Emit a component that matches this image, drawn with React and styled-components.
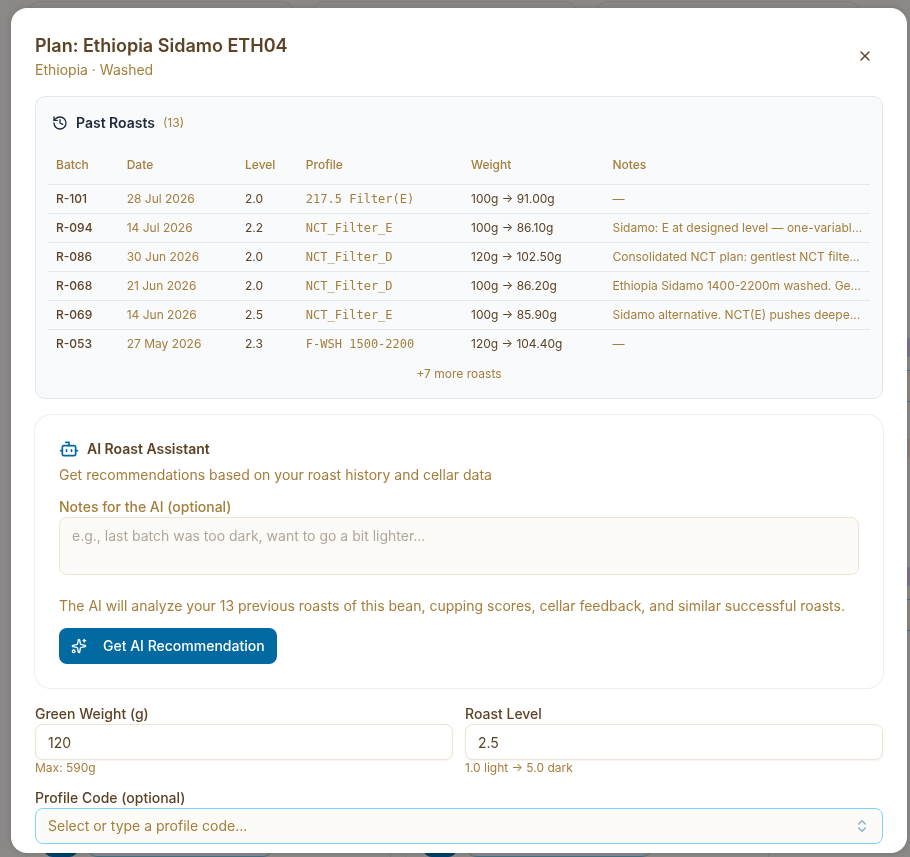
import React, { useState } from 'react';
import styled, { createGlobalStyle } from 'styled-components';
import { History, Bot, Sparkles, X, ChevronsUpDown } from 'lucide-react';

const GlobalStyle = createGlobalStyle`
  * { box-sizing: border-box; }
  body {
    margin: 0;
    background: #8b8987;
    color: #5c4326;
    font-family: Inter, sans-serif;
    font-size: 14px;
    line-height: 20px;
    overflow: hidden;
  }
  h2, h3, p { margin: 0; }
  button, input, textarea { font: inherit; color: inherit; }
`;
const Backdrop = styled.div`
  display: flex;
  flex-direction: column;
  justify-content: space-between;
  height: 100vh;
  overflow: hidden;
`;
const SummaryRow = styled.div`
  display: grid;
  grid-template-columns: repeat(3, 1fr);
  gap: 16px;
  padding: 1px 48px 0 27px;
`;
const SummaryCard = styled.div`
  height: 80px;
  border: 1px solid #807e7b;
  border-radius: 14px;
`;
const SideColumn = styled.div`
  align-self: flex-end;
  display: flex;
  flex-direction: column;
  width: 3px;
  padding-top: 70px;
  gap: 13px;
`;
const SideChip = styled.div`
  height: 19px;
  background: ${props => props.$color};
`;
const SideField = styled.div`
  height: 32px;
  margin-bottom: 24px;
  background: #8a8682;
  border-top: 1px solid #456f88;
  border-bottom: 1px solid #456f88;
`;
const BeanRow = styled.div`
  display: grid;
  grid-template-columns: repeat(2, 1fr);
  grid-template-rows: 100%;
  gap: 14px;
  height: 16px;
  padding: 0 141px 0 26px;
`;
const BeanCard = styled.div`
  display: flex;
  align-items: flex-end;
  gap: 8px;
  padding: 0 16px;
  border: 1px solid #817f7c;
  border-width: 0 1px;
`;
const BeanAction = styled.div`
  width: ${props => props.$wide ? '186px' : '36px'};
  height: 36px;
  border: 1px solid ${props => props.$wide ? '#456f88' : '#003f66'};
  border-radius: 10px;
  background: ${props => props.$wide ? 'transparent' : '#003f66'};
`;
const Overlay = styled.div`
  position: fixed;
  inset: 0;
  display: flex;
  padding: 8px 3px 4px 11px;
`;
const Dialog = styled.section`
  flex: 1;
  min-width: 0;
  padding: 24px;
  overflow: hidden;
  background: #fff;
  border-radius: 16px;
  box-shadow: 0 0 6px rgba(0, 0, 0, 0.15);
`;
const Header = styled.header`
  display: flex;
  align-items: center;
  justify-content: space-between;
  margin-bottom: 16px;
`;
const Title = styled.h2`
  font-size: 18px;
  font-weight: 600;
  line-height: 28px;
`;
const Muted = styled.p`
  color: #a47e3b;
`;
const CloseButton = styled.button`
  display: flex;
  align-items: center;
  justify-content: center;
  width: 36px;
  height: 36px;
  padding: 0;
  border: 0;
  background: none;
  cursor: pointer;
`;
const RoastPanel = styled.section`
  padding: 12px;
  margin-bottom: 16px;
  background: #f8fafc;
  border: 1px solid #e2e8f0;
  border-radius: 10px;
`;
const PanelTitle = styled.h3`
  display: flex;
  align-items: center;
  gap: 8px;
  padding: 4px;
  color: #1e293b;
  font-size: 14px;
  font-weight: 600;
`;
const Count = styled.span`
  color: #a47e3b;
  font-size: 12px;
  font-weight: 400;
`;
const Table = styled.table`
  width: 100%;
  margin-top: 8px;
  border-collapse: collapse;
  table-layout: fixed;
  font-size: 12px;
  line-height: 16px;
  tr + tr td {
    border-top: 1px solid #e2e8f0;
  }
`;
const Th = styled.th`
  width: ${props => props.$width};
  height: 39px;
  padding: 2px 8px 0;
  color: #a47e3b;
  font-weight: 500;
  text-align: left;
  border-bottom: 1px solid #e2e8f0;
`;
const Td = styled.td`
  padding: 6px 0 6px 8px;
  color: ${props => props.$muted ? '#a47e3b' : '#5c4326'};
  font-family: ${props => props.$mono ? '"DejaVu Sans Mono", monospace' : 'inherit'};
  font-weight: ${props => props.$strong ? 500 : 400};
  overflow: hidden;
  text-overflow: ellipsis;
  white-space: nowrap;
`;
const More = styled.p`
  padding: 8px 0 4px;
  color: #a47e3b;
  font-size: 12px;
  line-height: 16px;
  text-align: center;
`;
const AssistantCard = styled.section`
  padding: 24px;
  margin-bottom: 16px;
  border-radius: 16px;
  box-shadow: 0 0 0 1px #eeeeee;
`;
const AssistantTitle = styled.h3`
  display: flex;
  align-items: center;
  gap: 8px;
  margin-bottom: 6px;
  font-size: 14px;
  font-weight: 600;
  svg { color: #0369a1; }
`;
const Field = styled.div`
  flex: 1;
  min-width: 0;
`;
const Label = styled.label`
  display: block;
  color: ${props => props.$muted ? '#a47e3b' : '#5c4326'};
  font-weight: 500;
`;
const NotesField = styled(Field)`
  margin: 12px 0 21px;
`;
const Textarea = styled.textarea`
  display: block;
  width: 100%;
  height: 58px;
  padding: 8px 12px;
  background: #fdfbf8;
  border: 1px solid #ede5cf;
  border-radius: 8px;
  resize: none;
  &::placeholder { color: #b0a699; }
`;
const PrimaryButton = styled.button`
  display: flex;
  align-items: center;
  gap: 16px;
  height: 36px;
  padding: 0 12px;
  margin-top: 12px;
  border: 0;
  border-radius: 8px;
  background: #0369a1;
  color: #fff;
  font-weight: 500;
  cursor: pointer;
`;
const FieldRow = styled.div`
  display: flex;
  gap: 12px;
  margin-bottom: 12px;
`;
const Input = styled.input`
  display: block;
  width: 100%;
  height: 36px;
  padding: 1px 12px 0;
  background: #fff;
  border: 1px solid #ede5cf;
  border-radius: 8px;
  box-shadow: 0 1px 2px rgba(0, 0, 0, 0.05);
`;
const Hint = styled.p`
  color: #a47e3b;
  font-size: 12px;
  line-height: 16px;
`;
const Combo = styled.button`
  display: flex;
  align-items: center;
  justify-content: space-between;
  width: 100%;
  height: 36px;
  padding: 0 12px;
  background: #fdfbf8;
  border: 1px solid #7dd3fc;
  border-radius: 8px;
  color: #a47e3b;
  svg { color: #0369a1; opacity: 0.5; }
`;

const roasts = [
  { batch: 'R-101', date: '28 Jul 2026', level: '2.0', profile: '217.5 Filter(E)', weight: '100g → 91.00g', notes: '—' },
  { batch: 'R-094', date: '14 Jul 2026', level: '2.2', profile: 'NCT_Filter_E', weight: '100g → 86.10g', notes: 'Sidamo: E at designed level — one-variabl...' },
  { batch: 'R-086', date: '30 Jun 2026', level: '2.0', profile: 'NCT_Filter_D', weight: '120g → 102.50g', notes: 'Consolidated NCT plan: gentlest NCT filte...' },
  { batch: 'R-068', date: '21 Jun 2026', level: '2.0', profile: 'NCT_Filter_D', weight: '100g → 86.20g', notes: 'Ethiopia Sidamo 1400-2200m washed. Ge...' },
  { batch: 'R-069', date: '14 Jun 2026', level: '2.5', profile: 'NCT_Filter_E', weight: '100g → 85.90g', notes: 'Sidamo alternative. NCT(E) pushes deepe...' },
  { batch: 'R-053', date: '27 May 2026', level: '2.3', profile: 'F-WSH 1500-2200', weight: '120g → 104.40g', notes: '—' },
];

const PageBehind = () => (
  <Backdrop aria-hidden="true">
    <SummaryRow>
      <SummaryCard />
      <SummaryCard />
      <SummaryCard />
    </SummaryRow>
    <SideColumn>
      <SideChip $color="#7c748c" />
      <SideField />
      <SideChip $color="#8a7f78" />
      <SideChip $color="#8b8987" />
      <SideChip $color="#8b8987" />
      <SideChip $color="#8b8987" />
      <SideChip $color="#7c748c" />
      <SideField />
    </SideColumn>
    <BeanRow>
      <BeanCard><BeanAction /><BeanAction $wide /></BeanCard>
      <BeanCard><BeanAction /><BeanAction $wide /></BeanCard>
    </BeanRow>
  </Backdrop>
);

const PastRoasts = () => (
  <RoastPanel>
    <PanelTitle><History size={16} />Past Roasts <Count>(13)</Count></PanelTitle>
    <Table>
      <thead>
        <tr>
          <Th $width="8.6%">Batch</Th>
          <Th $width="14.4%">Date</Th>
          <Th $width="7.4%">Level</Th>
          <Th $width="20.1%">Profile</Th>
          <Th $width="17.2%">Weight</Th>
          <Th>Notes</Th>
        </tr>
      </thead>
      <tbody>
        {roasts.map(roast => (
          <tr key={roast.batch}>
            <Td $strong>{roast.batch}</Td>
            <Td $muted>{roast.date}</Td>
            <Td>{roast.level}</Td>
            <Td $muted $mono>{roast.profile}</Td>
            <Td>{roast.weight}</Td>
            <Td $muted>{roast.notes}</Td>
          </tr>
        ))}
      </tbody>
    </Table>
    <More>+7 more roasts</More>
  </RoastPanel>
);

const Assistant = () => {
  const [notes, setNotes] = useState('');
  return (
    <AssistantCard>
      <AssistantTitle><Bot size={20} />AI Roast Assistant</AssistantTitle>
      <Muted>Get recommendations based on your roast history and cellar data</Muted>
      <NotesField>
        <Label $muted htmlFor="notes">Notes for the AI (optional)</Label>
        <Textarea
          id="notes"
          value={notes}
          onChange={e => setNotes(e.target.value)}
          placeholder="e.g., last batch was too dark, want to go a bit lighter..."
        />
      </NotesField>
      <Muted>The AI will analyze your 13 previous roasts of this bean, cupping scores, cellar feedback, and similar successful roasts.</Muted>
      <PrimaryButton type="button"><Sparkles size={16} />Get AI Recommendation</PrimaryButton>
    </AssistantCard>
  );
};

const App = () => {
  const [weight, setWeight] = useState('120');
  const [level, setLevel] = useState('2.5');
  return (
    <>
      <GlobalStyle />
      <PageBehind />
      <Overlay>
        <Dialog role="dialog" aria-labelledby="plan-title">
          <Header>
            <div>
              <Title id="plan-title">Plan: Ethiopia Sidamo ETH04</Title>
              <Muted>Ethiopia · Washed</Muted>
            </div>
            <CloseButton type="button" aria-label="Close"><X size={16} /></CloseButton>
          </Header>
          <PastRoasts />
          <Assistant />
          <FieldRow>
            <Field>
              <Label htmlFor="weight">Green Weight (g)</Label>
              <Input id="weight" value={weight} onChange={e => setWeight(e.target.value)} />
              <Hint>Max: 590g</Hint>
            </Field>
            <Field>
              <Label htmlFor="level">Roast Level</Label>
              <Input id="level" value={level} onChange={e => setLevel(e.target.value)} />
              <Hint>1.0 light → 5.0 dark</Hint>
            </Field>
          </FieldRow>
          <Label htmlFor="profile">Profile Code (optional)</Label>
          <Combo id="profile" type="button" role="combobox" aria-expanded="false">
            Select or type a profile code...
            <ChevronsUpDown size={16} />
          </Combo>
        </Dialog>
      </Overlay>
    </>
  );
};

export default App;
